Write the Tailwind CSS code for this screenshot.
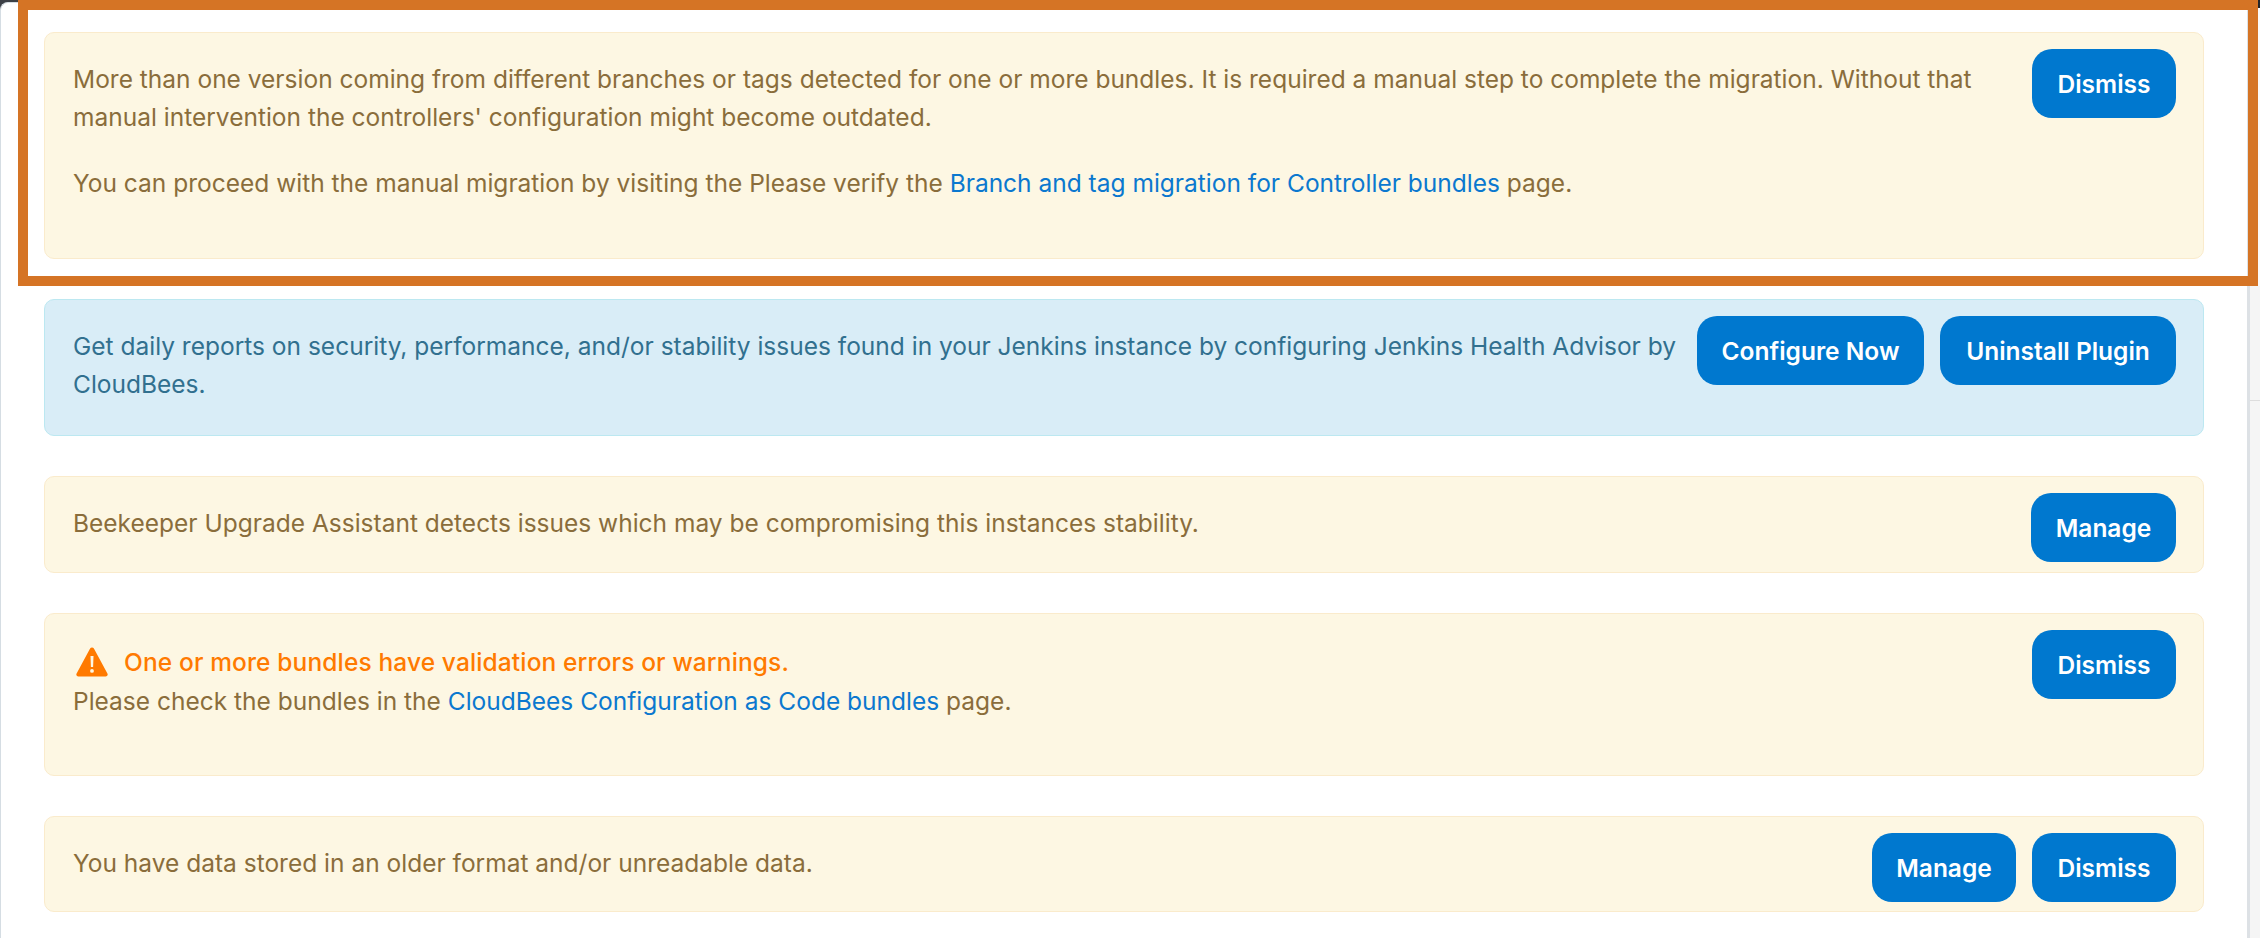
<!DOCTYPE html>
<html lang="en">
  <head>
    <meta charset="UTF-8" />
    <title>Manage Jenkins</title>
    <script src="https://cdn.jsdelivr.net/npm/@tailwindcss/browser@4"></script>
  </head>
  <body class="relative bg-white h-[938px] overflow-hidden font-['Inter',sans-serif] text-[24.5px] leading-[38px]">
    <div class="flex h-full">
      <main class="flex-1 border-l border-[#d5dde3] pt-8 pl-[43px] pr-[43px]">
        <div class="flex flex-col gap-10">
          <div class="flex items-start justify-between gap-4 h-[227px] rounded-[10px] border border-[#faebcc] bg-[#fdf7e3] pl-7 pr-[27px] pt-4 text-[#8a6d3b]">
            <div class="flex-1">
              <p class="pt-[11px]">More than one version coming from different branches or tags detected for one or more bundles. It is required a manual step to complete the migration. Without that manual intervention the controllers' configuration might become outdated.</p>
              <p class="mt-[28px]">You can proceed with the manual migration by visiting the Please verify the <a class="text-[#0b78cf]">Branch and tag migration for Controller bundles</a> page.</p>
            </div>
            <button class="h-[69px] w-[144px] rounded-[20px] bg-[#0078cf] font-semibold text-white">Dismiss</button>
          </div>

          <div class="flex items-start justify-between gap-4 h-[137px] rounded-[10px] border border-[#bce8f1] bg-[#d9edf7] pl-7 pr-[27px] pt-4 text-[#31708f]">
            <p class="flex-1 pt-[11px]">Get daily reports on security, performance, and/or stability issues found in your Jenkins instance by configuring Jenkins Health Advisor by CloudBees.</p>
            <button class="h-[69px] w-[227px] rounded-[20px] bg-[#0078cf] font-semibold text-white">Configure Now</button>
            <button class="h-[69px] w-[236px] rounded-[20px] bg-[#0078cf] font-semibold text-white">Uninstall Plugin</button>
          </div>

          <div class="flex items-start justify-between gap-4 h-[97px] rounded-[10px] border border-[#faebcc] bg-[#fdf7e3] pl-7 pr-[27px] pt-4 text-[#8a6d3b]">
            <p class="flex-1 pt-[11px]">Beekeeper Upgrade Assistant detects issues which may be compromising this instances stability.</p>
            <button class="h-[69px] w-[145px] rounded-[20px] bg-[#0078cf] font-semibold text-white">Manage</button>
          </div>

          <div class="flex items-start justify-between gap-4 h-[163px] rounded-[10px] border border-[#faebcc] bg-[#fdf7e3] pl-7 pr-[27px] pt-4 text-[#8a6d3b]">
            <div class="flex-1 pt-[13px]">
              <div class="flex items-center gap-4 mb-px pl-[3px] font-medium tracking-[0.13px] text-[#ff7a00]">
                <svg class="w-[32px] h-[32px] shrink-0" viewBox="0 0 32 32">
                  <path fill="#ff7a00" d="M16 1.5c.8 0 1.5.4 1.9 1.1l13.5 25c.8 1.4-.2 2.9-1.7 2.9H2.3C.8 30.5-.2 29 .6 27.6l13.5-25c.4-.7 1.1-1.1 1.9-1.1z" />
                  <path fill="#fdf7e3" d="M14.5 10h3l-.4 11h-2.2zM16 23a1.9 1.9 0 1 1 0 3.8 1.9 1.9 0 0 1 0-3.8z" />
                </svg>
                <span>One or more bundles have validation errors or warnings.</span>
              </div>
              <p>Please check the bundles in the <a class="text-[#0b78cf]">CloudBees Configuration as Code bundles</a> page.</p>
            </div>
            <button class="h-[69px] w-[144px] rounded-[20px] bg-[#0078cf] font-semibold text-white">Dismiss</button>
          </div>

          <div class="flex items-start justify-between gap-4 h-[96px] rounded-[10px] border border-[#faebcc] bg-[#fdf7e3] pl-7 pr-[27px] pt-4 text-[#8a6d3b]">
            <p class="flex-1 pt-[11px]">You have data stored in an older format and/or unreadable data.</p>
            <button class="h-[69px] w-[144px] rounded-[20px] bg-[#0078cf] font-semibold text-white">Manage</button>
            <button class="h-[69px] w-[144px] rounded-[20px] bg-[#0078cf] font-semibold text-white">Dismiss</button>
          </div>
        </div>
      </main>

      <!-- sliver of the next panel on the right -->
      <aside class="w-[13px] border-l-[3px] border-[#dde1e5] bg-[#f5f5f5]">
        <div class="mt-[400px] border-t border-[#dddddd]"></div>
      </aside>
    </div>

    <!-- window corners left in the capture -->
    <div class="absolute left-0 top-0 w-[18px] h-[12px] bg-[#3c4046]">
      <div class="mt-[2px] h-[10px] rounded-tl-[8px] border-l border-t border-[#d5dde3] bg-white"></div>
    </div>
    <div class="absolute right-0 top-0 w-[2px] h-[8px] bg-[#22262b]"></div>

    <!-- highlight frame -->
    <div class="absolute left-[18px] top-0 w-[2240px] h-[286px] border-[10px] border-[#d57425] bg-transparent"></div>
    <div class="absolute right-0 top-[8px] w-[2px] h-[278px] bg-[#fafafa]"></div>
  </body>
</html>
